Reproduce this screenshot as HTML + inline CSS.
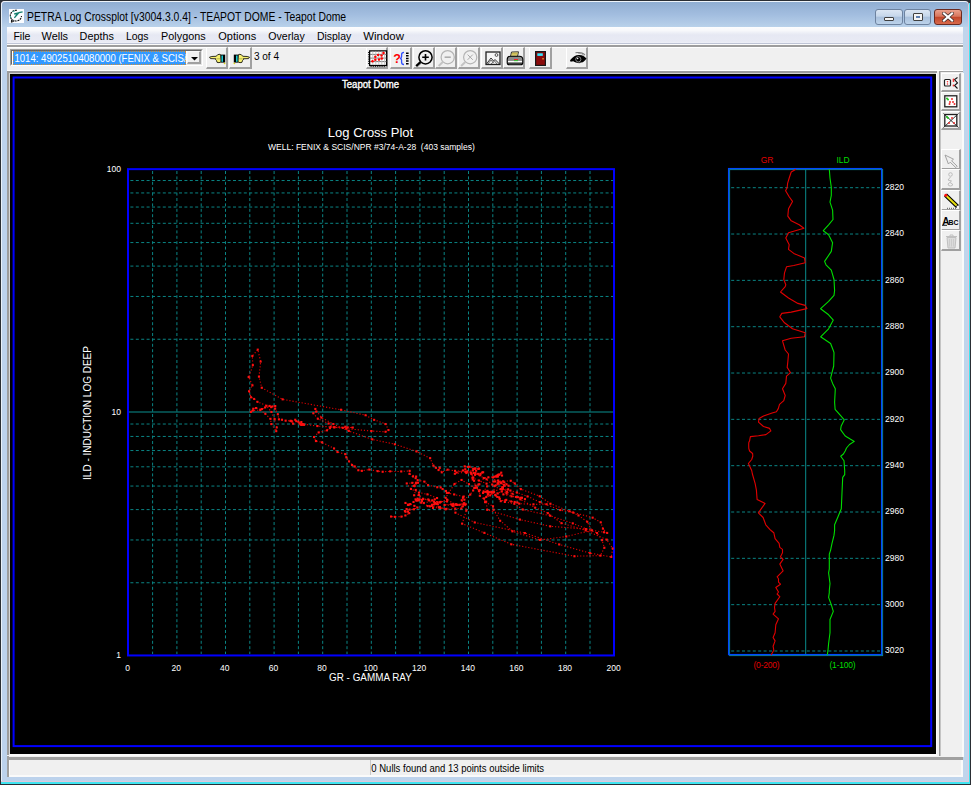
<!DOCTYPE html>
<html><head><meta charset="utf-8"><style>
*{margin:0;padding:0;box-sizing:border-box}
html,body{width:972px;height:786px;overflow:hidden;background:#fff;font-family:"Liberation Sans", sans-serif}
.abs{position:absolute}
svg text{font-family:"Liberation Sans", sans-serif}
.g{stroke:#0a8484;stroke-width:1;stroke-dasharray:3 2.4;fill:none}
.gs{stroke:#0b8f8f;stroke-width:1.2;fill:none}
</style></head><body>
<div class="abs" style="left:0;top:0;width:971px;height:785px;background:#2a2e34"></div>
<div class="abs" style="left:969px;top:3px;width:1.4px;height:781px;background:#40e4f0"></div>
<div class="abs" style="left:1px;top:782px;width:969px;height:1.6px;background:#40e4f0"></div>
<div class="abs" style="left:1px;top:1px;width:968px;height:781px;background:#e0c8da;border-radius:4px 4px 0 0"></div>
<div class="abs" style="left:1px;top:1px;width:967px;height:780px;background:linear-gradient(90deg,#bcd2ec,#c0d5ec);border-radius:4px 4px 0 0;border-top:1px solid #eef4fa;border-left:1px solid #e8f0f8"></div>
<div class="abs" style="left:2px;top:2px;width:966px;height:25px;border-radius:3px 3px 0 0;background:linear-gradient(#90aed2,#a2bddf 50%,#b9d1ea)"></div>
<svg class="abs" style="left:9px;top:9px" width="15" height="14" viewBox="0 0 15 14"><rect x="0" y="0" width="15" height="14" fill="#fafcff"/><path d="M8 1.3 C4 1 1.3 3.5 1.3 6.8 C1.3 9.8 3.8 12 7 12 C10 12 12.2 10 12.5 7" fill="none" stroke="#111" stroke-width="1.1" stroke-dasharray="2 0.8"/><path d="M2.6 10.5 L2.4 13.3 L5 12" fill="none" stroke="#111" stroke-width="1"/><path d="M13.6 2.8 L10 3.6 L6 8 M9.4 4 L5.2 5 M7.6 6 L5.4 8.8" fill="none" stroke="#138070" stroke-width="1.3"/><path d="M3.5 2.5 L6 2 M1.5 7 L1.8 9" stroke="#20a090" stroke-width="0.8"/></svg>
<div class="abs" style="left:875px;top:9px;width:28px;height:16px;border:1px solid #6d829f;border-radius:3px;background:linear-gradient(#dbe6f3,#c5d6ea 45%,#a9c0dc 50%,#bcd2ea)"></div>
<div class="abs" style="left:884px;top:17px;width:10px;height:4px;border:1px solid #404040;border-radius:1px;background:#f4f4f4"></div>
<div class="abs" style="left:904px;top:9px;width:27px;height:16px;border:1px solid #6d829f;border-radius:3px;background:linear-gradient(#dbe6f3,#c5d6ea 45%,#a9c0dc 50%,#bcd2ea)"></div>
<div class="abs" style="left:913px;top:13px;width:10px;height:8px;border:1px solid #404040;border-radius:1px;background:#f4f4f4"><div class="abs" style="left:2px;top:2px;width:4px;height:2px;background:#6080b0"></div></div>
<div class="abs" style="left:934px;top:9px;width:28px;height:16px;border:1px solid #6b2a20;border-radius:3px;background:linear-gradient(#eaa08c,#d8765e 45%,#c2462a 52%,#d86a4c)"></div>
<svg class="abs" style="left:942px;top:12px" width="12" height="10" viewBox="0 0 12 10"><path d="M2 1.5 L10 8.5 M10 1.5 L2 8.5" stroke="#3a2a2a" stroke-width="3.6" stroke-linecap="square"/><path d="M2 1.5 L10 8.5 M10 1.5 L2 8.5" stroke="#fff" stroke-width="2.2" stroke-linecap="square"/></svg>
<div class="abs" style="left:7px;top:27px;width:956px;height:17px;background:linear-gradient(#fdfdfe 0%,#f7f8fb 22%,#eceef6 38%,#e6e8f3 50%,#e8eaf4 90%,#eff0f8 100%);border-bottom:1px solid #bfc5d6"></div>
<div class="abs" style="left:7px;top:44px;width:956px;height:29px;background:#f0f0f0"></div>
<div class="abs" style="left:7px;top:44px;width:956px;height:1px;background:#fbfbfb"></div>
<div class="abs" style="left:7px;top:45px;width:956px;height:2px;background:#9d9d9d"></div>
<div class="abs" style="left:7px;top:47px;width:956px;height:1px;background:#ffffff"></div>
<div class="abs" style="left:7px;top:70px;width:956px;height:1px;background:#ffffff"></div>
<div class="abs" style="left:7px;top:71px;width:956px;height:2px;background:#a0a0a0"></div>
<div class="abs" style="left:7px;top:73px;width:956px;height:704px;background:#f0f0f0"></div>
<div class="abs" style="left:10px;top:49px;width:193px;height:17px;background:#fff;border-top:1px solid #a0a0a0;border-left:1px solid #a0a0a0;border-right:1px solid #fff;border-bottom:1px solid #fff"></div>
<div class="abs" style="left:11px;top:50px;width:191px;height:15px;border-top:1px solid #696969;border-left:1px solid #696969;border-right:1px solid #e3e3e3;border-bottom:1px solid #e3e3e3"></div>
<div class="abs" style="left:13px;top:51px;width:173px;height:14px;background:#3399ff;border:1px dotted #d89030"></div>
<div class="abs" style="left:187px;top:51px;width:14px;height:13px;background:#f0f0f0;border-top:1px solid #f8f8f8;border-left:1px solid #f8f8f8;border-right:2px solid #a0a0a0;border-bottom:2px solid #a0a0a0"></div>
<svg class="abs" style="left:191px;top:56.5px" width="8" height="5" viewBox="0 0 8 5"><path d="M0 0 H7 L3.5 3.6 Z" fill="#000"/></svg>
<div class="abs" style="left:206px;top:47px;width:22px;height:22px;background:#f0f0f0;border-top:1px solid #ffffff;border-left:1px solid #ffffff;border-right:2px solid #a0a0a0;border-bottom:2px solid #a0a0a0"></div>
<svg class="abs" style="left:208px;top:52px" width="18" height="13" viewBox="0 0 18 13"><path d="M1.5 5.2 Q3 4.2 8 4.3 L9.5 3 Q11 1.8 12.5 2.5 L13 10 Q11 11.2 9 10.3 L8.5 8.5 Q7 7.8 8 6.8 L2.5 6.6 Z" fill="#f6f070" stroke="#1a1a10" stroke-width="0.9"/><path d="M9 6.8 H12" stroke="#a0a040" stroke-width="0.7"/><rect x="13" y="2.6" width="4.2" height="8" fill="#000"/><rect x="13.4" y="3.5" width="1.6" height="6.3" fill="#18c8d0"/><circle cx="16.6" cy="11.3" r="0.9" fill="#d8d020"/></svg>
<div class="abs" style="left:229px;top:47px;width:23px;height:22px;background:#f0f0f0;border-top:1px solid #ffffff;border-left:1px solid #ffffff;border-right:2px solid #a0a0a0;border-bottom:2px solid #a0a0a0"></div>
<svg class="abs" style="left:233px;top:52px" width="18" height="13" viewBox="0 0 18 13"><g transform="translate(18 0) scale(-1 1)"><path d="M1.5 5.2 Q3 4.2 8 4.3 L9.5 3 Q11 1.8 12.5 2.5 L13 10 Q11 11.2 9 10.3 L8.5 8.5 Q7 7.8 8 6.8 L2.5 6.6 Z" fill="#f6f070" stroke="#1a1a10" stroke-width="0.9"/><path d="M9 6.8 H12" stroke="#a0a040" stroke-width="0.7"/><rect x="13" y="2.6" width="4.2" height="8" fill="#000"/><rect x="13.4" y="3.5" width="1.6" height="6.3" fill="#18c8d0"/><circle cx="16.6" cy="11.3" r="0.9" fill="#d8d020"/></g></svg>
<div class="abs" style="left:366px;top:47px;width:22px;height:22px;background:#f0f0f0;border-top:1px solid #ffffff;border-left:1px solid #ffffff;border-right:2px solid #a0a0a0;border-bottom:2px solid #a0a0a0"></div>
<div class="abs" style="left:390px;top:47px;width:22px;height:22px;background:#f0f0f0;border-top:1px solid #ffffff;border-left:1px solid #ffffff;border-right:2px solid #a0a0a0;border-bottom:2px solid #a0a0a0"></div>
<div class="abs" style="left:413px;top:47px;width:22px;height:22px;background:#f0f0f0;border-top:1px solid #ffffff;border-left:1px solid #ffffff;border-right:2px solid #a0a0a0;border-bottom:2px solid #a0a0a0"></div>
<div class="abs" style="left:435px;top:47px;width:22px;height:22px;background:#f0f0f0;border-top:1px solid #ffffff;border-left:1px solid #ffffff;border-right:2px solid #a0a0a0;border-bottom:2px solid #a0a0a0"></div>
<div class="abs" style="left:458px;top:47px;width:22px;height:22px;background:#f0f0f0;border-top:1px solid #ffffff;border-left:1px solid #ffffff;border-right:2px solid #a0a0a0;border-bottom:2px solid #a0a0a0"></div>
<div class="abs" style="left:481px;top:47px;width:22px;height:22px;background:#f0f0f0;border-top:1px solid #ffffff;border-left:1px solid #ffffff;border-right:2px solid #a0a0a0;border-bottom:2px solid #a0a0a0"></div>
<div class="abs" style="left:503px;top:47px;width:22px;height:22px;background:#f0f0f0;border-top:1px solid #ffffff;border-left:1px solid #ffffff;border-right:2px solid #a0a0a0;border-bottom:2px solid #a0a0a0"></div>
<div class="abs" style="left:529px;top:47px;width:23px;height:22px;background:#f0f0f0;border-top:1px solid #ffffff;border-left:1px solid #ffffff;border-right:2px solid #a0a0a0;border-bottom:2px solid #a0a0a0"></div>
<div class="abs" style="left:566px;top:47px;width:22px;height:22px;background:#f0f0f0;border-top:1px solid #ffffff;border-left:1px solid #ffffff;border-right:2px solid #a0a0a0;border-bottom:2px solid #a0a0a0"></div>
<svg class="abs" style="left:366px;top:47px" width="24" height="22" viewBox="0 0 24 22"><rect x="3.6" y="3.9" width="17" height="14.6" fill="#fff" stroke="#000" stroke-width="1.3"/><line x1="4" y1="7.4" x2="20.5" y2="7.4" stroke="#6a6a6a" stroke-width="0.9"/><line x1="4" y1="11.1" x2="20.5" y2="11.1" stroke="#6a6a6a" stroke-width="0.9"/><line x1="4" y1="14.6" x2="20.5" y2="14.6" stroke="#6a6a6a" stroke-width="0.9"/><line x1="6.8" y1="4.5" x2="6.8" y2="18" stroke="#c0c0c0" stroke-width="0.9"/><line x1="9.8" y1="4.5" x2="9.8" y2="18" stroke="#c0c0c0" stroke-width="0.9"/><line x1="12.8" y1="4.5" x2="12.8" y2="18" stroke="#c0c0c0" stroke-width="0.9"/><line x1="15.8" y1="4.5" x2="15.8" y2="18" stroke="#c0c0c0" stroke-width="0.9"/><line x1="18.6" y1="4.5" x2="18.6" y2="18" stroke="#c0c0c0" stroke-width="0.9"/><path d="M2.6 5 V18" stroke="#101010" stroke-width="1" stroke-dasharray="1 1.2"/><path d="M4.5 19.6 H20" stroke="#202020" stroke-width="1" stroke-dasharray="1.2 1"/><circle cx="6.5" cy="14.2" r="1.25" fill="#ff0000"/><circle cx="9.3" cy="9.7" r="1.25" fill="#ff0000"/><circle cx="9.3" cy="12.7" r="1.25" fill="#ff0000"/><circle cx="12.1" cy="7.9" r="1.25" fill="#ff0000"/><circle cx="13" cy="12.5" r="1.25" fill="#ff0000"/><circle cx="15.5" cy="8.6" r="1.25" fill="#ff0000"/><circle cx="15.8" cy="11.6" r="1.25" fill="#ff0000"/><circle cx="17.5" cy="6" r="1.25" fill="#ff0000"/></svg>
<svg class="abs" style="left:393px;top:51px" width="17" height="15" viewBox="0 0 17 15"><text x="0.3" y="12" font-size="12.5" font-weight="bold" fill="#ff0000" font-family="Liberation Serif">?</text><path d="M11 1.3 Q8.6 1.3 8.6 3.5 L8.6 5.5 Q8.6 7.2 7 7.4 Q8.6 7.6 8.6 9.3 L8.6 11.3 Q8.6 13.5 11 13.5" fill="none" stroke="#3050ff" stroke-width="1.3"/><path d="M14.3 1.5 V14" stroke="#000" stroke-width="2.6" stroke-dasharray="1.5 1.1"/></svg>
<svg class="abs" style="left:415px;top:49px" width="20" height="19" viewBox="0 0 20 19"><circle cx="10.5" cy="8.3" r="6.6" fill="none" stroke="#000" stroke-width="1.5"/><path d="M10.5 5 V11.6 M7.2 8.3 H13.8" stroke="#000" stroke-width="1.6"/><path d="M5.6 13.2 L1.2 17.2" stroke="#000" stroke-width="2.4"/><path d="M2.5 17.8 L6.5 14.2" stroke="#909090" stroke-width="0.7"/></svg>
<svg class="abs" style="left:437px;top:49px" width="20" height="19" viewBox="0 0 20 19"><circle cx="10.7" cy="8.2" r="6.6" fill="none" stroke="#b4b4b4" stroke-width="1.2"/><path d="M7.6 8.2 H13.8" stroke="#a8a8a8" stroke-width="1.5"/><path d="M5.8 13 L1.6 17" stroke="#c4c4c4" stroke-width="2"/></svg>
<svg class="abs" style="left:460px;top:49px" width="20" height="19" viewBox="0 0 20 19"><circle cx="10.2" cy="8.2" r="6.6" fill="none" stroke="#b4b4b4" stroke-width="1.2"/><path d="M7.6 5.6 L12.8 10.8 M12.8 5.6 L7.6 10.8" stroke="#a8a8a8" stroke-width="1"/><path d="M5.3 13 L1.1 17" stroke="#c4c4c4" stroke-width="2"/></svg>
<svg class="abs" style="left:485px;top:51px" width="16" height="15" viewBox="0 0 16 15"><rect x="1" y="1" width="14" height="12.5" fill="#f4f4f4" stroke="#202020" stroke-width="1.3"/><path d="M1.5 13 L6 7 L8.5 10 L10 8.5 L14.5 13" fill="none" stroke="#303030" stroke-width="1"/><path d="M3 13 L6 9 L8.5 12 M6 13 L9.5 10 L12 13" fill="none" stroke="#505050" stroke-width="0.8"/><circle cx="11.5" cy="4" r="1.4" fill="none" stroke="#404040" stroke-width="0.9"/></svg>
<svg class="abs" style="left:506px;top:51px" width="18" height="15" viewBox="0 0 18 15"><path d="M5.5 1 L12.5 0.8 L11.5 5.5 L4.5 5.5 Z" fill="#f4ee9a" stroke="#202020" stroke-width="0.9"/><path d="M6 2.4 H11.5 M5.6 3.9 H11.2" stroke="#b8a030" stroke-width="0.8"/><path d="M1.2 8.5 Q1.2 5.2 4.5 5.2 L13.5 5.2 Q16.8 5.2 16.8 8.5 L16.8 11.5 Q16.8 13.8 14.5 13.8 L3.5 13.8 Q1.2 13.8 1.2 11.5 Z" fill="#8c8c8c" stroke="#000" stroke-width="1.1"/><path d="M2 10.6 H16" stroke="#fff" stroke-width="1.3"/><path d="M8 8.6 H12" stroke="#ff2020" stroke-width="1.1"/><path d="M8 9.7 H12" stroke="#20d020" stroke-width="0.9"/><path d="M2 12.3 H16" stroke="#303030" stroke-width="1"/></svg>
<svg class="abs" style="left:535px;top:51px" width="11" height="15" viewBox="0 0 11 15"><rect x="0.6" y="0.6" width="9.8" height="13.8" fill="#8a0a0a" stroke="#181818" stroke-width="1.2"/><rect x="2.3" y="2.3" width="5.5" height="2.6" fill="#30e8ff"/><rect x="7.3" y="7" width="1.5" height="1.5" fill="#e09030"/></svg>
<svg class="abs" style="left:569px;top:51px" width="19" height="13" viewBox="0 0 19 13"><path d="M6.5 1.8 Q12 0.6 16 3.6" fill="none" stroke="#707070" stroke-width="1.1"/><path d="M9 2.2 Q13 2 15.5 4.8" fill="none" stroke="#909090" stroke-width="0.8"/><path d="M1 9.3 Q5.5 3.6 10.5 4 Q15 4.3 17.5 7.6 Q15 11.8 10.5 12.2 Q6.5 12.4 4.3 10.2 L1.6 10.8 Z" fill="#000"/><circle cx="9.3" cy="8.3" r="2.6" fill="none" stroke="#d8d8d8" stroke-width="0.6"/><circle cx="8.6" cy="7.5" r="0.8" fill="#f0f0f0"/><path d="M5 11.6 Q9 13 13 11.8" fill="none" stroke="#fff" stroke-width="0.6"/></svg>
<div class="abs" style="left:937px;top:71px;width:26px;height:686px;background:#f0f0f0"></div>
<div class="abs" style="left:962px;top:73px;width:2px;height:684px;background:#fafafa"></div>
<div class="abs" style="left:939px;top:71px;width:1px;height:685px;background:#969696"></div><div class="abs" style="left:940px;top:72px;width:1px;height:684px;background:#c4c4c4"></div>
<div class="abs" style="left:939px;top:71px;width:24px;height:1px;background:#a0a0a0"></div>
<div class="abs" style="left:941px;top:73px;width:20px;height:19px;background:#f0f0f0;border-top:1px solid #ffffff;border-left:1px solid #ffffff;border-right:2px solid #a0a0a0;border-bottom:2px solid #a0a0a0"></div>
<div class="abs" style="left:941px;top:92px;width:20px;height:19px;background:#f0f0f0;border-top:1px solid #ffffff;border-left:1px solid #ffffff;border-right:2px solid #a0a0a0;border-bottom:2px solid #a0a0a0"></div>
<div class="abs" style="left:941px;top:111px;width:20px;height:19px;background:#f0f0f0;border-top:1px solid #ffffff;border-left:1px solid #ffffff;border-right:2px solid #a0a0a0;border-bottom:2px solid #a0a0a0"></div>
<div class="abs" style="left:941px;top:149px;width:20px;height:21px;background:#f0f0f0;border-top:1px solid #ffffff;border-left:1px solid #ffffff;border-right:2px solid #a0a0a0;border-bottom:2px solid #a0a0a0"></div>
<div class="abs" style="left:941px;top:169px;width:20px;height:21px;background:#f0f0f0;border-top:1px solid #ffffff;border-left:1px solid #ffffff;border-right:2px solid #a0a0a0;border-bottom:2px solid #a0a0a0"></div>
<div class="abs" style="left:941px;top:190px;width:20px;height:21px;background:#f0f0f0;border-top:1px solid #ffffff;border-left:1px solid #ffffff;border-right:2px solid #a0a0a0;border-bottom:2px solid #a0a0a0"></div>
<div class="abs" style="left:941px;top:210px;width:20px;height:21px;background:#f0f0f0;border-top:1px solid #ffffff;border-left:1px solid #ffffff;border-right:2px solid #a0a0a0;border-bottom:2px solid #a0a0a0"></div>
<div class="abs" style="left:941px;top:230px;width:20px;height:21px;background:#f0f0f0;border-top:1px solid #ffffff;border-left:1px solid #ffffff;border-right:2px solid #a0a0a0;border-bottom:2px solid #a0a0a0"></div>
<svg class="abs" style="left:943px;top:76px" width="16" height="14" viewBox="0 0 16 14"><rect x="1.5" y="3.5" width="6" height="6.5" rx="1" fill="#fff" stroke="#202020" stroke-width="1.2"/><circle cx="4.5" cy="5.8" r="0.8" fill="#f03030"/><circle cx="4.5" cy="8" r="0.8" fill="#f03030"/><path d="M14.5 1.5 L11.5 3.5 L14.5 7 L11.5 9.5 L14.5 12.5" fill="none" stroke="#101010" stroke-width="1.1"/><circle cx="10.5" cy="3.5" r="0.9" fill="#f03030"/><circle cx="10.5" cy="5" r="0.9" fill="#f03030"/><circle cx="10.5" cy="9.5" r="0.9" fill="#f03030"/></svg>
<svg class="abs" style="left:944px;top:95px" width="14" height="13" viewBox="0 0 14 13"><rect x="0.8" y="0.8" width="12" height="11" fill="#fff" stroke="#202020" stroke-width="1.3"/><circle cx="3" cy="3.5" r="1" fill="#20c020"/><circle cx="4" cy="4.5" r="1" fill="#20c020"/><circle cx="8" cy="4" r="1" fill="#f03030"/><circle cx="6" cy="7" r="1" fill="#f03030"/><circle cx="9" cy="7" r="1" fill="#f03030"/><circle cx="10.5" cy="9" r="1" fill="#f03030"/><circle cx="5.5" cy="9" r="1" fill="#f03030"/></svg>
<svg class="abs" style="left:943px;top:113px" width="16" height="15" viewBox="0 0 16 15"><rect x="1.8" y="1.5" width="12" height="11.5" fill="#fff" stroke="#202020" stroke-width="1.3"/><path d="M0.5 0.5 L15.5 14.5 M15.5 0.5 L0.5 14.5" stroke="#303030" stroke-width="1"/><circle cx="4" cy="4" r="1" fill="#20c020"/><circle cx="5" cy="5" r="1" fill="#20c020"/><circle cx="9" cy="5" r="1" fill="#f03030"/><circle cx="6" cy="10" r="1" fill="#f03030"/><circle cx="11" cy="10" r="1" fill="#f03030"/></svg>
<svg class="abs" style="left:943px;top:152px" width="17" height="17" viewBox="0 0 17 17"><path d="M2 3 L10.5 7.2 L8.6 8.8 L14.2 14.2 L12.8 15.6 L7.2 10.2 L5.4 12 Z" fill="#f0f0f0" stroke="#9a9a9a" stroke-width="0.9"/></svg>
<svg class="abs" style="left:945px;top:172px" width="11" height="15" viewBox="0 0 11 15"><circle cx="5.5" cy="2.5" r="1.8" fill="none" stroke="#b8b8b8" stroke-width="0.9"/><path d="M5.5 5 L3 8 L6.5 9 L3 12 Q3 14 5.5 14 Q8 14 7.5 12 L5 10.5" fill="none" stroke="#b8b8b8" stroke-width="0.9"/></svg>
<svg class="abs" style="left:943px;top:192px" width="18" height="17" viewBox="0 0 18 17"><path d="M2.5 3 L14.5 14.5" stroke="#000" stroke-width="4.2"/><path d="M3 3.5 L13.5 13.5" stroke="#e8e010" stroke-width="2"/><path d="M13.6 13.6 L15.6 15.6" stroke="#fff" stroke-width="1.2"/><circle cx="2.8" cy="3.2" r="1.5" fill="#ff1010"/><path d="M4 16.3 H13" stroke="#303030" stroke-width="0.8" stroke-dasharray="1 1"/></svg>
<svg class="abs" style="left:941px;top:213px" width="19" height="15" viewBox="0 0 19 15"><text x="1.2" y="11.5" font-size="10" font-family="Liberation Serif" font-weight="bold" fill="#000">A</text><text x="7.6" y="11.5" font-size="8" font-family="Liberation Sans" font-weight="bold" fill="#000" textLength="10" lengthAdjust="spacingAndGlyphs">BC</text><path d="M1 12.3 H6" stroke="#000" stroke-width="0.9"/></svg>
<svg class="abs" style="left:945px;top:234px" width="13" height="15" viewBox="0 0 13 15"><path d="M1 2.5 H12 M5 2.5 V1 H8 V2.5" fill="none" stroke="#c0c0c0" stroke-width="1"/><path d="M2 3.5 L3 14 H10 L11 3.5 Z" fill="#dcdcdc" stroke="#c0c0c0" stroke-width="1"/><path d="M4.5 5 V12.5 M6.5 5 V12.5 M8.5 5 V12.5" stroke="#c8c8c8" stroke-width="0.8"/></svg>
<div class="abs" style="left:7px;top:71px;width:930px;height:2px;background:#9c9c9c"></div>
<div class="abs" style="left:7px;top:71px;width:2px;height:684px;background:#9c9c9c"></div>
<div class="abs" style="left:9px;top:73px;width:928px;height:1px;background:#d4d4d4"></div>
<div class="abs" style="left:9px;top:73px;width:1px;height:681px;background:#d4d4d4"></div>
<div class="abs" style="left:936px;top:73px;width:1px;height:682px;background:#fafafa"></div>
<div class="abs" style="left:10px;top:754px;width:927px;height:2px;background:#fafafa"></div>
<div class="abs" style="left:10px;top:74px;width:926px;height:680px;background:#000"></div>
<div class="abs" style="left:7px;top:757px;width:956px;height:3px;background:#a0a0a0"></div>
<div class="abs" style="left:7px;top:760px;width:956px;height:17px;background:#f0f0f0;border-bottom:2px solid #fafafa"></div>
<div class="abs" style="left:7px;top:756px;width:2px;height:21px;background:#a0a0a0"></div>
<div class="abs" style="left:9px;top:760px;width:1px;height:15px;background:#fafafa"></div>
<div class="abs" style="left:961px;top:760px;width:2px;height:17px;background:#fafafa"></div>
<div class="abs" style="left:370px;top:760px;width:1px;height:15px;background:#c8c8c8"></div>
<svg class="abs" style="left:0;top:0" width="972" height="786"><text x="27.0" y="20.7" font-size="12.5" fill="#000" textLength="319.1" lengthAdjust="spacingAndGlyphs" >PETRA Log Crossplot [v3004.3.0.4] - TEAPOT DOME - Teapot Dome</text><text x="13.4" y="39.8" font-size="11.2" fill="#000" textLength="17.0" lengthAdjust="spacingAndGlyphs" >File</text><text x="41.6" y="39.8" font-size="11.2" fill="#000" textLength="26.5" lengthAdjust="spacingAndGlyphs" >Wells</text><text x="79.6" y="39.8" font-size="11.2" fill="#000" textLength="34.2" lengthAdjust="spacingAndGlyphs" >Depths</text><text x="125.9" y="39.8" font-size="11.2" fill="#000" textLength="22.7" lengthAdjust="spacingAndGlyphs" >Logs</text><text x="161.1" y="39.8" font-size="11.2" fill="#000" textLength="44.5" lengthAdjust="spacingAndGlyphs" >Polygons</text><text x="218.3" y="39.8" font-size="11.2" fill="#000" textLength="37.9" lengthAdjust="spacingAndGlyphs" >Options</text><text x="268.3" y="39.8" font-size="11.2" fill="#000" textLength="36.5" lengthAdjust="spacingAndGlyphs" >Overlay</text><text x="316.9" y="39.8" font-size="11.2" fill="#000" textLength="34.3" lengthAdjust="spacingAndGlyphs" >Display</text><text x="363.3" y="39.8" font-size="11.2" fill="#000" textLength="40.6" lengthAdjust="spacingAndGlyphs" >Window</text><svg x="13" y="51" width="173" height="14"><text x="1.4" y="10.6" font-size="10.8" fill="#fff" textLength="172.2" lengthAdjust="spacingAndGlyphs">1014: 49025104080000 (FENIX &amp; SCIS/</text></svg><text x="253.9" y="59.6" font-size="11.5" fill="#000" textLength="25.1" lengthAdjust="spacingAndGlyphs" >3 of 4</text><text x="371.3" y="772" font-size="11.3" fill="#000" textLength="172.8" lengthAdjust="spacingAndGlyphs" >0 Nulls found and 13 points outside limits</text></svg>
<svg class="abs" style="left:0;top:0" width="972" height="786" viewBox="0 0 972 786">
<rect x="13.6" y="77.5" width="917.6" height="668.6" fill="none" stroke="#0000ff" stroke-width="2"/>
<line x1="152.60" y1="171" x2="152.60" y2="654" class="g"/>
<line x1="176.90" y1="171" x2="176.90" y2="654" class="g"/>
<line x1="201.20" y1="171" x2="201.20" y2="654" class="g"/>
<line x1="225.50" y1="171" x2="225.50" y2="654" class="g"/>
<line x1="249.80" y1="171" x2="249.80" y2="654" class="g"/>
<line x1="274.10" y1="171" x2="274.10" y2="654" class="g"/>
<line x1="298.40" y1="171" x2="298.40" y2="654" class="g"/>
<line x1="322.70" y1="171" x2="322.70" y2="654" class="g"/>
<line x1="347.00" y1="171" x2="347.00" y2="654" class="g"/>
<line x1="371.30" y1="171" x2="371.30" y2="654" class="g"/>
<line x1="395.60" y1="171" x2="395.60" y2="654" class="g"/>
<line x1="419.90" y1="171" x2="419.90" y2="654" class="g"/>
<line x1="444.20" y1="171" x2="444.20" y2="654" class="g"/>
<line x1="468.50" y1="171" x2="468.50" y2="654" class="g"/>
<line x1="492.80" y1="171" x2="492.80" y2="654" class="g"/>
<line x1="517.10" y1="171" x2="517.10" y2="654" class="g"/>
<line x1="541.40" y1="171" x2="541.40" y2="654" class="g"/>
<line x1="565.70" y1="171" x2="565.70" y2="654" class="g"/>
<line x1="590.00" y1="171" x2="590.00" y2="654" class="g"/>
<line x1="130.4" y1="582.75" x2="613" y2="582.75" class="g"/>
<line x1="130.4" y1="539.96" x2="613" y2="539.96" class="g"/>
<line x1="130.4" y1="509.60" x2="613" y2="509.60" class="g"/>
<line x1="130.4" y1="486.05" x2="613" y2="486.05" class="g"/>
<line x1="130.4" y1="466.81" x2="613" y2="466.81" class="g"/>
<line x1="130.4" y1="450.54" x2="613" y2="450.54" class="g"/>
<line x1="130.4" y1="436.45" x2="613" y2="436.45" class="g"/>
<line x1="130.4" y1="424.02" x2="613" y2="424.02" class="g"/>
<line x1="130.4" y1="339.25" x2="613" y2="339.25" class="g"/>
<line x1="130.4" y1="296.46" x2="613" y2="296.46" class="g"/>
<line x1="130.4" y1="266.10" x2="613" y2="266.10" class="g"/>
<line x1="130.4" y1="242.55" x2="613" y2="242.55" class="g"/>
<line x1="130.4" y1="223.31" x2="613" y2="223.31" class="g"/>
<line x1="130.4" y1="207.04" x2="613" y2="207.04" class="g"/>
<line x1="130.4" y1="192.95" x2="613" y2="192.95" class="g"/>
<line x1="130.4" y1="180.52" x2="613" y2="180.52" class="g"/>
<line x1="129" y1="412.00" x2="613" y2="412.00" class="gs"/>
<rect x="128" y="169.15" width="486" height="486.3" fill="none" stroke="#0000ff" stroke-width="2"/>
<line x1="731.2" y1="187.70" x2="881" y2="187.70" class="g"/>
<line x1="731.2" y1="234.03" x2="881" y2="234.03" class="g"/>
<line x1="731.2" y1="280.36" x2="881" y2="280.36" class="g"/>
<line x1="731.2" y1="326.69" x2="881" y2="326.69" class="g"/>
<line x1="731.2" y1="373.02" x2="881" y2="373.02" class="g"/>
<line x1="731.2" y1="419.35" x2="881" y2="419.35" class="g"/>
<line x1="731.2" y1="465.68" x2="881" y2="465.68" class="g"/>
<line x1="731.2" y1="512.01" x2="881" y2="512.01" class="g"/>
<line x1="731.2" y1="558.34" x2="881" y2="558.34" class="g"/>
<line x1="731.2" y1="604.67" x2="881" y2="604.67" class="g"/>
<line x1="731.2" y1="651.00" x2="881" y2="651.00" class="g"/>
<line x1="805.7" y1="169" x2="805.7" y2="655" stroke="#0a8c8c" stroke-width="1"/>
<rect x="729.6" y="169.6" width="153" height="486" fill="none" stroke="#0a8c8c" stroke-width="1"/>
<rect x="728.6" y="168.6" width="153" height="486" fill="none" stroke="#0048ff" stroke-width="1.3"/>
<path d="M795.9 169.3 L791.2 172.0 L789.2 178.0 L787.6 183.4 L787.2 187.4 L785.6 190.7 L789.2 196.8 L792.5 201.4 L788.5 208.8 L787.8 216.2 L791.2 220.8 L799.2 224.8 L803.9 228.2 L797.9 230.0 L788.5 232.7 L785.8 238.0 L789.2 244.7 L788.5 249.4 L793.8 253.4 L804.5 258.1 L805.2 262.8 L793.8 265.5 L786.5 266.8 L784.5 272.8 L783.8 279.5 L785.8 284.8 L785.2 286.7 L780.5 292.0 L788.5 298.0 L797.9 303.4 L805.2 305.4 L806.9 308.6 L791.2 312.1 L781.8 313.4 L779.8 316.8 L784.5 322.8 L792.5 328.8 L805.2 332.8 L804.5 336.8 L791.2 338.2 L782.5 340.8 L785.2 350.0 L788.5 354.0 L787.8 362.0 L787.2 367.4 L790.5 372.7 L786.5 376.1 L785.8 383.4 L782.5 388.8 L785.2 395.5 L783.8 400.6 L779.5 404.3 L778.3 408.6 L776.4 411.7 L772.1 413.0 L763.5 416.0 L759.1 418.5 L758.5 422.2 L763.5 426.5 L769.6 428.4 L770.9 430.9 L765.9 434.6 L758.5 435.8 L750.4 436.6 L750.0 438.5 L749.6 440.8 L748.8 442.5 L748.7 445.0 L748.8 448.5 L749.6 451.0 L752.6 453.5 L752.8 456.0 L751.7 459.5 L748.4 463.5 L751.7 470.5 L752.4 474.0 L755.1 483.4 L756.4 490.1 L757.1 499.4 L765.1 503.4 L761.7 508.1 L758.4 512.8 L763.1 517.5 L765.8 524.8 L769.8 529.3 L771.1 530.5 L773.8 532.7 L775.1 538.7 L779.1 543.4 L779.8 547.4 L782.5 549.4 L782.5 552.7 L780.5 556.8 L783.1 559.4 L779.8 564.1 L783.1 570.8 L777.1 576.8 L778.5 578.8 L778.5 582.2 L780.5 584.2 L775.8 587.5 L778.5 592.0 L777.1 594.0 L779.8 596.7 L775.1 603.4 L774.5 607.4 L775.1 611.4 L773.1 614.1 L778.5 618.8 L775.8 624.8 L775.1 632.8 L773.1 637.5 L775.1 640.9 L773.1 646.2 L773.8 650.2 L771.1 654.9" fill="none" stroke="#e00000" stroke-width="1.1" stroke-linejoin="round"/>
<path d="M829.3 169.3 L830.0 178.0 L831.3 187.4 L831.3 195.4 L830.0 202.1 L832.6 210.1 L833.0 219.5 L828.6 224.8 L823.3 230.7 L828.6 234.7 L832.6 242.7 L831.3 251.4 L824.6 261.4 L826.0 264.8 L831.3 270.1 L834.0 279.5 L834.6 290.5 L834.0 295.4 L828.6 301.4 L820.6 308.7 L828.6 314.8 L833.3 320.1 L828.6 328.8 L820.6 336.8 L830.6 343.5 L833.3 350.5 L834.0 352.7 L833.7 366.0 L832.0 372.7 L830.6 378.1 L832.6 383.4 L835.3 388.8 L834.6 402.2 L835.1 409.3 L840.0 414.8 L844.3 419.8 L841.2 425.9 L840.6 429.6 L845.0 435.8 L846.4 436.7 L849.8 438.8 L854.3 441.4 L849.5 444.5 L846.5 448.0 L845.2 451.0 L843.4 454.0 L840.7 456.2 L844.0 460.8 L844.7 470.5 L844.7 474.7 L842.7 477.4 L842.0 492.7 L841.3 508.8 L838.0 516.8 L834.6 524.8 L834.6 530.5 L834.0 535.4 L832.0 543.4 L830.6 550.1 L829.3 554.1 L829.3 568.8 L828.6 572.8 L830.0 583.5 L829.3 590.5 L829.3 592.7 L828.6 597.4 L831.3 604.7 L833.3 611.4 L830.0 619.5 L830.0 632.8 L828.6 643.5 L828.0 650.2 L827.3 654.9" fill="none" stroke="#00dd00" stroke-width="1.1" stroke-linejoin="round"/>
<path d="M546.6 504.2 L533.5 504.4 L519.3 503.7 L517.2 502.4 L514.6 502.0 L511.2 501.4 L505.6 500.2 L506.3 499.9 L500.8 501.1 L499.7 498.8 L499.2 497.3 L497.3 496.8 L495.2 494.8 L493.0 492.4 L494.1 491.9 L491.5 492.7 L488.3 492.1 L486.0 491.8 L483.1 492.9 L487.5 490.8 L491.5 491.8 L497.8 493.4 L501.7 491.3 L503.4 494.4 L511.6 496.4 L517.9 497.1 L520.4 497.7 L524.9 499.1 L522.0 497.8 L515.9 496.9 L512.6 493.7 L506.9 491.9 L502.1 488.7 L502.3 487.6 L497.6 483.4 L501.1 482.8 L495.5 485.5 L498.1 483.4 L495.2 481.4 L498.8 481.9 L503.2 481.3 L510.7 480.8 L514.8 483.5 L520.8 489.1 L539.6 496.2 L550.5 503.7 L569.5 511.3 L578.4 515.4 L587.2 521.7 L591.8 530.4 L566.3 536.5 L539.9 540.0 L512.5 531.3 L500.2 520.7 L493.5 509.7 L493.1 506.3 L485.1 502.1 L484.0 498.5 L490.1 495.3 L493.7 491.7 L494.6 486.1 L501.2 483.2 L503.9 485.0 L504.6 485.7 L503.0 487.2 L503.0 488.6 L502.1 489.2 L510.5 490.6 L517.0 492.5 L527.6 496.4 L539.9 502.1 L560.3 510.1 L573.2 512.5 L592.6 517.6 L600.8 522.4 L602.9 528.7 L607.2 533.0 L604.0 532.3 L585.8 529.1 L550.2 526.3 L519.9 519.6 L487.3 509.8 L486.1 501.6 L479.9 495.8 L479.3 490.2 L478.9 491.2 L476.9 487.8 L475.5 485.6 L474.0 480.8 L472.7 479.6 L473.3 477.4 L471.3 473.9 L474.9 474.8 L480.3 475.2 L480.5 473.9 L482.2 472.6 L483.1 472.2 L478.2 473.9 L475.4 472.9 L466.3 473.0 L463.0 470.4 L456.6 472.6 L454.8 473.7 L466.0 472.0 L473.7 473.0 L486.5 479.2 L492.3 484.6 L506.5 493.4 L520.4 499.4 L535.2 507.7 L547.8 513.1 L561.5 523.1 L585.7 530.4 L606.7 539.7 L612.7 548.4 L611.3 557.0 L590.0 553.1 L559.3 544.5 L524.9 533.0 L474.8 522.5 L455.4 512.7 L453.3 503.8 L445.6 497.8 L448.7 492.9 L454.5 484.0 L461.5 480.0 L468.9 484.1 L474.3 488.0 L487.5 492.4 L495.8 495.6 L504.8 501.9 L514.4 503.8 L522.9 509.6 L550.2 515.7 L572.8 523.4 L597.0 533.0 L602.1 540.2 L604.4 547.8 L600.4 555.6 L574.4 556.2 L511.3 544.3 L484.3 532.9 L462.2 523.6 L466.4 510.6 L464.3 499.7 L470.2 494.5 L473.1 490.4 L475.2 487.9 L478.4 484.6 L479.3 484.3 L483.8 478.0 L488.3 477.3 L497.8 476.6 L501.3 472.7 L498.6 474.5 L502.0 475.5 L499.4 474.7 L496.6 475.8 L497.7 475.1 L496.6 476.3 L494.4 476.6 L496.3 476.3 L492.9 477.4 L497.2 476.0 L493.5 481.5 L498.1 480.5 L504.4 482.5 L506.6 484.3 L508.5 485.8 L508.1 489.5 L500.7 489.0 L487.8 493.4 L488.0 494.6 L486.2 497.0 L489.2 492.1 L483.6 491.5 L487.1 486.4 L486.6 483.6 L479.0 480.6 L472.5 477.7 L470.9 472.6 L465.3 469.4 L464.6 466.3 L467.9 466.9 L469.6 466.7 L473.2 468.7 L475.2 468.3 L479.0 468.5 L478.4 468.9 L476.2 470.7 L474.9 468.9 L472.8 470.5 L467.3 471.6 L455.1 470.9 L447.7 469.7 L441.7 472.4 L439.7 467.8 L438.5 470.1 L435.9 467.7 L433.3 465.5 L430.1 458.2 L416.5 451.4 L394.8 444.2 L372.2 439.4 L348.8 431.0 L333.4 424.0 L321.4 417.6 L315.3 408.9 L316.2 411.6 L313.3 413.2 L317.9 418.8 L328.6 423.5 L334.3 427.3 L346.5 428.7 L371.4 431.0 L385.5 431.8 L388.5 430.1 L385.6 424.0 L374.2 419.8 L365.5 415.2 L341.0 409.8 L282.6 399.4 L261.7 387.7 L259.0 376.6 L260.7 361.6 L257.8 349.6 L252.3 356.0 L252.9 365.2 L248.7 377.1 L252.5 385.3 L249.1 391.2 L251.1 397.2 L254.1 398.9 L257.4 401.8 L266.4 405.7 L271.4 412.0 L274.7 419.1 L276.7 427.5 L276.2 431.1 L271.3 424.1 L270.4 418.9 L265.3 413.8 L260.2 410.1 L252.8 410.5 L250.8 412.0 L253.2 408.7 L256.0 408.0 L262.0 409.0 L265.0 407.4 L269.6 406.0 L271.1 407.2 L272.5 406.4 L275.3 406.1 L275.1 408.7 L277.8 414.3 L278.9 419.4 L282.0 419.8 L285.7 420.7 L290.4 420.9 L290.8 420.8 L293.0 423.6 L291.8 421.4 L295.2 419.7 L296.3 421.1 L298.4 421.8 L299.5 423.2 L300.6 424.5 L302.1 424.8 L301.3 422.0 L301.2 424.4 L303.8 424.8 L301.5 424.9 L304.1 424.8 L302.7 424.1 L317.5 426.1 L330.5 426.9 L347.3 427.5 L352.8 427.6 L345.3 426.7 L342.8 427.8 L334.4 427.3 L329.9 428.1 L326.9 430.4 L318.6 432.4 L314.1 437.0 L316.0 441.0 L322.0 442.4 L334.1 448.5 L337.4 452.1 L345.4 454.2 L346.4 457.3 L349.1 461.3 L352.1 464.9 L354.7 466.5 L358.3 470.3 L361.9 470.9 L369.2 469.5 L377.8 471.1 L382.7 471.7 L390.2 471.4 L401.2 471.5 L409.7 470.9 L409.5 473.8 L416.2 476.6 L413.0 476.5 L415.6 478.1 L417.6 480.1 L424.5 481.6 L428.1 485.2 L437.3 487.2 L440.7 487.4 L442.5 489.0 L445.9 490.9 L446.9 492.9 L454.2 494.5 L463.7 496.6 L462.9 497.6 L461.8 500.2 L463.5 503.9 L457.4 504.8 L455.7 504.4 L453.4 505.4 L459.7 504.7 L463.9 503.3 L462.5 506.4 L457.0 504.8 L451.2 504.3 L444.6 504.9 L452.7 505.3 L452.7 506.0 L456.2 504.4 L464.2 504.7 L465.8 504.2 L461.4 508.4 L455.3 508.6 L445.5 509.3 L439.8 506.9 L430.0 506.4 L431.9 504.7 L437.8 504.2 L437.5 502.1 L440.0 502.5 L440.6 501.9 L447.1 499.6 L447.1 501.5 L434.0 501.7 L421.1 502.6 L423.7 503.0 L427.6 506.1 L433.9 504.4 L436.8 503.8 L431.9 505.9 L433.1 507.9 L439.0 507.6 L446.4 508.8 L440.3 508.1 L435.0 503.0 L428.3 499.5 L423.0 498.9 L418.9 495.1 L414.2 495.3 L415.7 489.9 L414.6 485.9 L413.6 485.9 L415.8 483.5 L418.0 482.8 L416.1 482.7 L412.2 482.8 L406.8 483.5 L410.9 488.9 L418.9 492.6 L427.4 494.3 L437.1 498.0 L434.7 499.4 L432.3 500.4 L429.2 500.4 L423.1 498.8 L422.1 501.2 L422.1 499.9 L417.6 498.7 L419.7 499.4 L418.8 500.4 L415.6 499.3 L417.2 500.5 L416.3 500.5 L413.5 501.9 L409.3 504.6 L405.5 502.9 L407.9 504.9 L410.3 504.0 L414.4 505.9 L417.5 507.5 L414.0 509.3 L409.6 509.5 L406.6 509.0 L407.9 511.5 L404.9 511.0 L405.6 511.7 L409.3 513.2 L405.5 515.5 L401.5 516.6 L395.0 516.8 L391.1 516.6" fill="none" stroke="#e00000" stroke-width="1.1" stroke-dasharray="1.2 1.9"/>
<g fill="#ff1010"><rect x="545.6" y="503.2" width="2.1" height="2.1"/><rect x="532.4" y="503.3" width="2.1" height="2.1"/><rect x="518.2" y="502.6" width="2.1" height="2.1"/><rect x="516.2" y="501.4" width="2.1" height="2.1"/><rect x="513.6" y="500.9" width="2.1" height="2.1"/><rect x="510.1" y="500.4" width="2.1" height="2.1"/><rect x="504.6" y="499.1" width="2.1" height="2.1"/><rect x="505.2" y="498.8" width="2.1" height="2.1"/><rect x="499.7" y="500.1" width="2.1" height="2.1"/><rect x="498.6" y="497.8" width="2.1" height="2.1"/><rect x="498.1" y="496.3" width="2.1" height="2.1"/><rect x="496.2" y="495.8" width="2.1" height="2.1"/><rect x="494.2" y="493.7" width="2.1" height="2.1"/><rect x="492.0" y="491.4" width="2.1" height="2.1"/><rect x="493.0" y="490.8" width="2.1" height="2.1"/><rect x="490.5" y="491.7" width="2.1" height="2.1"/><rect x="487.2" y="491.0" width="2.1" height="2.1"/><rect x="485.0" y="490.7" width="2.1" height="2.1"/><rect x="482.0" y="491.9" width="2.1" height="2.1"/><rect x="486.4" y="489.8" width="2.1" height="2.1"/><rect x="490.4" y="490.7" width="2.1" height="2.1"/><rect x="496.7" y="492.4" width="2.1" height="2.1"/><rect x="500.6" y="490.3" width="2.1" height="2.1"/><rect x="502.3" y="493.3" width="2.1" height="2.1"/><rect x="510.5" y="495.3" width="2.1" height="2.1"/><rect x="516.8" y="496.1" width="2.1" height="2.1"/><rect x="519.4" y="496.7" width="2.1" height="2.1"/><rect x="523.9" y="498.1" width="2.1" height="2.1"/><rect x="520.9" y="496.7" width="2.1" height="2.1"/><rect x="514.9" y="495.9" width="2.1" height="2.1"/><rect x="511.5" y="492.7" width="2.1" height="2.1"/><rect x="505.9" y="490.8" width="2.1" height="2.1"/><rect x="501.0" y="487.6" width="2.1" height="2.1"/><rect x="501.3" y="486.6" width="2.1" height="2.1"/><rect x="496.5" y="482.4" width="2.1" height="2.1"/><rect x="500.1" y="481.7" width="2.1" height="2.1"/><rect x="494.5" y="484.4" width="2.1" height="2.1"/><rect x="497.0" y="482.3" width="2.1" height="2.1"/><rect x="494.2" y="480.4" width="2.1" height="2.1"/><rect x="497.8" y="480.8" width="2.1" height="2.1"/><rect x="502.1" y="480.2" width="2.1" height="2.1"/><rect x="509.7" y="479.7" width="2.1" height="2.1"/><rect x="513.7" y="482.4" width="2.1" height="2.1"/><rect x="519.8" y="488.1" width="2.1" height="2.1"/><rect x="538.6" y="495.2" width="2.1" height="2.1"/><rect x="549.4" y="502.7" width="2.1" height="2.1"/><rect x="568.4" y="510.2" width="2.1" height="2.1"/><rect x="577.4" y="514.4" width="2.1" height="2.1"/><rect x="586.2" y="520.7" width="2.1" height="2.1"/><rect x="590.8" y="529.3" width="2.1" height="2.1"/><rect x="565.2" y="535.4" width="2.1" height="2.1"/><rect x="538.9" y="538.9" width="2.1" height="2.1"/><rect x="511.4" y="530.3" width="2.1" height="2.1"/><rect x="499.1" y="519.7" width="2.1" height="2.1"/><rect x="492.5" y="508.6" width="2.1" height="2.1"/><rect x="492.0" y="505.2" width="2.1" height="2.1"/><rect x="484.0" y="501.1" width="2.1" height="2.1"/><rect x="483.0" y="497.4" width="2.1" height="2.1"/><rect x="489.1" y="494.3" width="2.1" height="2.1"/><rect x="492.7" y="490.7" width="2.1" height="2.1"/><rect x="493.5" y="485.0" width="2.1" height="2.1"/><rect x="500.2" y="482.1" width="2.1" height="2.1"/><rect x="502.9" y="484.0" width="2.1" height="2.1"/><rect x="503.5" y="484.7" width="2.1" height="2.1"/><rect x="501.9" y="486.1" width="2.1" height="2.1"/><rect x="501.9" y="487.5" width="2.1" height="2.1"/><rect x="501.1" y="488.1" width="2.1" height="2.1"/><rect x="509.4" y="489.5" width="2.1" height="2.1"/><rect x="515.9" y="491.5" width="2.1" height="2.1"/><rect x="526.5" y="495.4" width="2.1" height="2.1"/><rect x="538.8" y="501.0" width="2.1" height="2.1"/><rect x="559.2" y="509.0" width="2.1" height="2.1"/><rect x="572.1" y="511.4" width="2.1" height="2.1"/><rect x="591.6" y="516.6" width="2.1" height="2.1"/><rect x="599.7" y="521.3" width="2.1" height="2.1"/><rect x="601.9" y="527.6" width="2.1" height="2.1"/><rect x="606.1" y="531.9" width="2.1" height="2.1"/><rect x="602.9" y="531.2" width="2.1" height="2.1"/><rect x="584.8" y="528.0" width="2.1" height="2.1"/><rect x="549.2" y="525.3" width="2.1" height="2.1"/><rect x="518.9" y="518.5" width="2.1" height="2.1"/><rect x="486.2" y="508.8" width="2.1" height="2.1"/><rect x="485.1" y="500.6" width="2.1" height="2.1"/><rect x="478.8" y="494.7" width="2.1" height="2.1"/><rect x="478.3" y="489.1" width="2.1" height="2.1"/><rect x="477.9" y="490.1" width="2.1" height="2.1"/><rect x="475.9" y="486.7" width="2.1" height="2.1"/><rect x="474.5" y="484.6" width="2.1" height="2.1"/><rect x="473.0" y="479.7" width="2.1" height="2.1"/><rect x="471.7" y="478.5" width="2.1" height="2.1"/><rect x="472.3" y="476.4" width="2.1" height="2.1"/><rect x="470.2" y="472.8" width="2.1" height="2.1"/><rect x="473.9" y="473.8" width="2.1" height="2.1"/><rect x="479.2" y="474.2" width="2.1" height="2.1"/><rect x="479.4" y="472.9" width="2.1" height="2.1"/><rect x="481.1" y="471.5" width="2.1" height="2.1"/><rect x="482.1" y="471.2" width="2.1" height="2.1"/><rect x="477.1" y="472.8" width="2.1" height="2.1"/><rect x="474.4" y="471.9" width="2.1" height="2.1"/><rect x="465.3" y="472.0" width="2.1" height="2.1"/><rect x="461.9" y="469.4" width="2.1" height="2.1"/><rect x="455.5" y="471.5" width="2.1" height="2.1"/><rect x="453.8" y="472.7" width="2.1" height="2.1"/><rect x="465.0" y="470.9" width="2.1" height="2.1"/><rect x="472.6" y="471.9" width="2.1" height="2.1"/><rect x="485.5" y="478.2" width="2.1" height="2.1"/><rect x="491.2" y="483.5" width="2.1" height="2.1"/><rect x="505.5" y="492.4" width="2.1" height="2.1"/><rect x="519.4" y="498.3" width="2.1" height="2.1"/><rect x="534.1" y="506.6" width="2.1" height="2.1"/><rect x="546.8" y="512.1" width="2.1" height="2.1"/><rect x="560.4" y="522.1" width="2.1" height="2.1"/><rect x="584.6" y="529.3" width="2.1" height="2.1"/><rect x="605.7" y="538.6" width="2.1" height="2.1"/><rect x="611.6" y="547.4" width="2.1" height="2.1"/><rect x="610.2" y="555.9" width="2.1" height="2.1"/><rect x="589.0" y="552.1" width="2.1" height="2.1"/><rect x="558.2" y="543.4" width="2.1" height="2.1"/><rect x="523.8" y="532.0" width="2.1" height="2.1"/><rect x="473.7" y="521.4" width="2.1" height="2.1"/><rect x="454.4" y="511.6" width="2.1" height="2.1"/><rect x="452.2" y="502.8" width="2.1" height="2.1"/><rect x="444.6" y="496.7" width="2.1" height="2.1"/><rect x="447.7" y="491.8" width="2.1" height="2.1"/><rect x="453.5" y="482.9" width="2.1" height="2.1"/><rect x="460.5" y="478.9" width="2.1" height="2.1"/><rect x="467.9" y="483.1" width="2.1" height="2.1"/><rect x="473.2" y="487.0" width="2.1" height="2.1"/><rect x="486.5" y="491.3" width="2.1" height="2.1"/><rect x="494.7" y="494.5" width="2.1" height="2.1"/><rect x="503.8" y="500.9" width="2.1" height="2.1"/><rect x="513.3" y="502.7" width="2.1" height="2.1"/><rect x="521.8" y="508.5" width="2.1" height="2.1"/><rect x="549.2" y="514.7" width="2.1" height="2.1"/><rect x="571.7" y="522.3" width="2.1" height="2.1"/><rect x="596.0" y="532.0" width="2.1" height="2.1"/><rect x="601.0" y="539.1" width="2.1" height="2.1"/><rect x="603.3" y="546.7" width="2.1" height="2.1"/><rect x="599.4" y="554.6" width="2.1" height="2.1"/><rect x="573.4" y="555.2" width="2.1" height="2.1"/><rect x="510.3" y="543.3" width="2.1" height="2.1"/><rect x="483.3" y="531.8" width="2.1" height="2.1"/><rect x="461.1" y="522.6" width="2.1" height="2.1"/><rect x="465.3" y="509.5" width="2.1" height="2.1"/><rect x="463.3" y="498.6" width="2.1" height="2.1"/><rect x="469.2" y="493.5" width="2.1" height="2.1"/><rect x="472.1" y="489.4" width="2.1" height="2.1"/><rect x="474.1" y="486.8" width="2.1" height="2.1"/><rect x="477.3" y="483.5" width="2.1" height="2.1"/><rect x="478.3" y="483.2" width="2.1" height="2.1"/><rect x="482.8" y="477.0" width="2.1" height="2.1"/><rect x="487.3" y="476.3" width="2.1" height="2.1"/><rect x="496.8" y="475.5" width="2.1" height="2.1"/><rect x="500.2" y="471.6" width="2.1" height="2.1"/><rect x="497.5" y="473.5" width="2.1" height="2.1"/><rect x="501.0" y="474.5" width="2.1" height="2.1"/><rect x="498.4" y="473.6" width="2.1" height="2.1"/><rect x="495.6" y="474.8" width="2.1" height="2.1"/><rect x="496.6" y="474.1" width="2.1" height="2.1"/><rect x="495.5" y="475.2" width="2.1" height="2.1"/><rect x="493.3" y="475.6" width="2.1" height="2.1"/><rect x="495.3" y="475.3" width="2.1" height="2.1"/><rect x="491.9" y="476.4" width="2.1" height="2.1"/><rect x="496.2" y="474.9" width="2.1" height="2.1"/><rect x="492.4" y="480.5" width="2.1" height="2.1"/><rect x="497.1" y="479.4" width="2.1" height="2.1"/><rect x="503.3" y="481.4" width="2.1" height="2.1"/><rect x="505.5" y="483.3" width="2.1" height="2.1"/><rect x="507.5" y="484.7" width="2.1" height="2.1"/><rect x="507.1" y="488.4" width="2.1" height="2.1"/><rect x="499.7" y="488.0" width="2.1" height="2.1"/><rect x="486.8" y="492.4" width="2.1" height="2.1"/><rect x="486.9" y="493.5" width="2.1" height="2.1"/><rect x="485.2" y="495.9" width="2.1" height="2.1"/><rect x="488.1" y="491.1" width="2.1" height="2.1"/><rect x="482.6" y="490.5" width="2.1" height="2.1"/><rect x="486.1" y="485.3" width="2.1" height="2.1"/><rect x="485.5" y="482.6" width="2.1" height="2.1"/><rect x="477.9" y="479.5" width="2.1" height="2.1"/><rect x="471.4" y="476.7" width="2.1" height="2.1"/><rect x="469.8" y="471.6" width="2.1" height="2.1"/><rect x="464.2" y="468.4" width="2.1" height="2.1"/><rect x="463.6" y="465.3" width="2.1" height="2.1"/><rect x="466.9" y="465.8" width="2.1" height="2.1"/><rect x="468.5" y="465.7" width="2.1" height="2.1"/><rect x="472.1" y="467.7" width="2.1" height="2.1"/><rect x="474.2" y="467.3" width="2.1" height="2.1"/><rect x="478.0" y="467.5" width="2.1" height="2.1"/><rect x="477.4" y="467.9" width="2.1" height="2.1"/><rect x="475.1" y="469.7" width="2.1" height="2.1"/><rect x="473.8" y="467.8" width="2.1" height="2.1"/><rect x="471.8" y="469.4" width="2.1" height="2.1"/><rect x="466.2" y="470.6" width="2.1" height="2.1"/><rect x="454.0" y="469.8" width="2.1" height="2.1"/><rect x="446.6" y="468.6" width="2.1" height="2.1"/><rect x="440.7" y="471.3" width="2.1" height="2.1"/><rect x="438.6" y="466.7" width="2.1" height="2.1"/><rect x="437.5" y="469.0" width="2.1" height="2.1"/><rect x="434.8" y="466.7" width="2.1" height="2.1"/><rect x="432.3" y="464.5" width="2.1" height="2.1"/><rect x="429.1" y="457.1" width="2.1" height="2.1"/><rect x="415.5" y="450.4" width="2.1" height="2.1"/><rect x="393.8" y="443.2" width="2.1" height="2.1"/><rect x="371.2" y="438.3" width="2.1" height="2.1"/><rect x="347.8" y="429.9" width="2.1" height="2.1"/><rect x="332.3" y="423.0" width="2.1" height="2.1"/><rect x="320.3" y="416.5" width="2.1" height="2.1"/><rect x="314.3" y="407.9" width="2.1" height="2.1"/><rect x="315.2" y="410.5" width="2.1" height="2.1"/><rect x="312.3" y="412.2" width="2.1" height="2.1"/><rect x="316.8" y="417.7" width="2.1" height="2.1"/><rect x="327.6" y="422.5" width="2.1" height="2.1"/><rect x="333.2" y="426.2" width="2.1" height="2.1"/><rect x="345.5" y="427.7" width="2.1" height="2.1"/><rect x="370.4" y="430.0" width="2.1" height="2.1"/><rect x="384.5" y="430.7" width="2.1" height="2.1"/><rect x="387.4" y="429.0" width="2.1" height="2.1"/><rect x="384.5" y="423.0" width="2.1" height="2.1"/><rect x="373.1" y="418.8" width="2.1" height="2.1"/><rect x="364.5" y="414.2" width="2.1" height="2.1"/><rect x="340.0" y="408.7" width="2.1" height="2.1"/><rect x="281.6" y="398.3" width="2.1" height="2.1"/><rect x="260.7" y="386.7" width="2.1" height="2.1"/><rect x="257.9" y="375.6" width="2.1" height="2.1"/><rect x="259.6" y="360.5" width="2.1" height="2.1"/><rect x="256.7" y="348.6" width="2.1" height="2.1"/><rect x="251.3" y="354.9" width="2.1" height="2.1"/><rect x="251.8" y="364.1" width="2.1" height="2.1"/><rect x="247.6" y="376.0" width="2.1" height="2.1"/><rect x="251.4" y="384.3" width="2.1" height="2.1"/><rect x="248.0" y="390.2" width="2.1" height="2.1"/><rect x="250.0" y="396.2" width="2.1" height="2.1"/><rect x="253.1" y="397.9" width="2.1" height="2.1"/><rect x="256.4" y="400.8" width="2.1" height="2.1"/><rect x="265.4" y="404.7" width="2.1" height="2.1"/><rect x="270.4" y="410.9" width="2.1" height="2.1"/><rect x="273.6" y="418.1" width="2.1" height="2.1"/><rect x="275.7" y="426.4" width="2.1" height="2.1"/><rect x="275.2" y="430.1" width="2.1" height="2.1"/><rect x="270.3" y="423.0" width="2.1" height="2.1"/><rect x="269.4" y="417.8" width="2.1" height="2.1"/><rect x="264.3" y="412.7" width="2.1" height="2.1"/><rect x="259.2" y="409.0" width="2.1" height="2.1"/><rect x="251.8" y="409.5" width="2.1" height="2.1"/><rect x="249.8" y="410.9" width="2.1" height="2.1"/><rect x="252.2" y="407.7" width="2.1" height="2.1"/><rect x="255.0" y="407.0" width="2.1" height="2.1"/><rect x="261.0" y="408.0" width="2.1" height="2.1"/><rect x="264.0" y="406.4" width="2.1" height="2.1"/><rect x="268.6" y="404.9" width="2.1" height="2.1"/><rect x="270.1" y="406.1" width="2.1" height="2.1"/><rect x="271.4" y="405.4" width="2.1" height="2.1"/><rect x="274.2" y="405.0" width="2.1" height="2.1"/><rect x="274.1" y="407.6" width="2.1" height="2.1"/><rect x="276.8" y="413.2" width="2.1" height="2.1"/><rect x="277.9" y="418.3" width="2.1" height="2.1"/><rect x="280.9" y="418.7" width="2.1" height="2.1"/><rect x="284.6" y="419.6" width="2.1" height="2.1"/><rect x="289.4" y="419.9" width="2.1" height="2.1"/><rect x="289.8" y="419.8" width="2.1" height="2.1"/><rect x="292.0" y="422.6" width="2.1" height="2.1"/><rect x="290.7" y="420.4" width="2.1" height="2.1"/><rect x="294.2" y="418.7" width="2.1" height="2.1"/><rect x="295.2" y="420.1" width="2.1" height="2.1"/><rect x="297.4" y="420.7" width="2.1" height="2.1"/><rect x="298.5" y="422.2" width="2.1" height="2.1"/><rect x="299.5" y="423.4" width="2.1" height="2.1"/><rect x="301.1" y="423.7" width="2.1" height="2.1"/><rect x="300.3" y="421.0" width="2.1" height="2.1"/><rect x="300.2" y="423.4" width="2.1" height="2.1"/><rect x="302.8" y="423.7" width="2.1" height="2.1"/><rect x="300.5" y="423.8" width="2.1" height="2.1"/><rect x="303.1" y="423.7" width="2.1" height="2.1"/><rect x="301.7" y="423.0" width="2.1" height="2.1"/><rect x="316.4" y="425.0" width="2.1" height="2.1"/><rect x="329.5" y="425.8" width="2.1" height="2.1"/><rect x="346.3" y="426.4" width="2.1" height="2.1"/><rect x="351.7" y="426.5" width="2.1" height="2.1"/><rect x="344.3" y="425.7" width="2.1" height="2.1"/><rect x="341.8" y="426.7" width="2.1" height="2.1"/><rect x="333.3" y="426.3" width="2.1" height="2.1"/><rect x="328.9" y="427.1" width="2.1" height="2.1"/><rect x="325.9" y="429.3" width="2.1" height="2.1"/><rect x="317.6" y="431.4" width="2.1" height="2.1"/><rect x="313.0" y="436.0" width="2.1" height="2.1"/><rect x="314.9" y="440.0" width="2.1" height="2.1"/><rect x="320.9" y="441.3" width="2.1" height="2.1"/><rect x="333.0" y="447.4" width="2.1" height="2.1"/><rect x="336.4" y="451.0" width="2.1" height="2.1"/><rect x="344.3" y="453.1" width="2.1" height="2.1"/><rect x="345.3" y="456.3" width="2.1" height="2.1"/><rect x="348.0" y="460.3" width="2.1" height="2.1"/><rect x="351.0" y="463.9" width="2.1" height="2.1"/><rect x="353.7" y="465.4" width="2.1" height="2.1"/><rect x="357.3" y="469.2" width="2.1" height="2.1"/><rect x="360.8" y="469.8" width="2.1" height="2.1"/><rect x="368.2" y="468.5" width="2.1" height="2.1"/><rect x="376.7" y="470.1" width="2.1" height="2.1"/><rect x="381.6" y="470.7" width="2.1" height="2.1"/><rect x="389.1" y="470.3" width="2.1" height="2.1"/><rect x="400.2" y="470.4" width="2.1" height="2.1"/><rect x="408.6" y="469.8" width="2.1" height="2.1"/><rect x="408.4" y="472.8" width="2.1" height="2.1"/><rect x="415.1" y="475.5" width="2.1" height="2.1"/><rect x="412.0" y="475.4" width="2.1" height="2.1"/><rect x="414.6" y="477.1" width="2.1" height="2.1"/><rect x="416.6" y="479.1" width="2.1" height="2.1"/><rect x="423.4" y="480.6" width="2.1" height="2.1"/><rect x="427.0" y="484.1" width="2.1" height="2.1"/><rect x="436.2" y="486.2" width="2.1" height="2.1"/><rect x="439.6" y="486.4" width="2.1" height="2.1"/><rect x="441.5" y="488.0" width="2.1" height="2.1"/><rect x="444.9" y="489.9" width="2.1" height="2.1"/><rect x="445.8" y="491.9" width="2.1" height="2.1"/><rect x="453.2" y="493.4" width="2.1" height="2.1"/><rect x="462.7" y="495.5" width="2.1" height="2.1"/><rect x="461.9" y="496.6" width="2.1" height="2.1"/><rect x="460.7" y="499.2" width="2.1" height="2.1"/><rect x="462.5" y="502.8" width="2.1" height="2.1"/><rect x="456.3" y="503.8" width="2.1" height="2.1"/><rect x="454.6" y="503.3" width="2.1" height="2.1"/><rect x="452.4" y="504.3" width="2.1" height="2.1"/><rect x="458.6" y="503.7" width="2.1" height="2.1"/><rect x="462.9" y="502.2" width="2.1" height="2.1"/><rect x="461.5" y="505.4" width="2.1" height="2.1"/><rect x="455.9" y="503.8" width="2.1" height="2.1"/><rect x="450.2" y="503.3" width="2.1" height="2.1"/><rect x="443.5" y="503.9" width="2.1" height="2.1"/><rect x="451.6" y="504.2" width="2.1" height="2.1"/><rect x="451.7" y="505.0" width="2.1" height="2.1"/><rect x="455.1" y="503.3" width="2.1" height="2.1"/><rect x="463.1" y="503.6" width="2.1" height="2.1"/><rect x="464.7" y="503.2" width="2.1" height="2.1"/><rect x="460.3" y="507.4" width="2.1" height="2.1"/><rect x="454.3" y="507.5" width="2.1" height="2.1"/><rect x="444.5" y="508.3" width="2.1" height="2.1"/><rect x="438.8" y="505.9" width="2.1" height="2.1"/><rect x="428.9" y="505.3" width="2.1" height="2.1"/><rect x="430.9" y="503.7" width="2.1" height="2.1"/><rect x="436.8" y="503.2" width="2.1" height="2.1"/><rect x="436.4" y="501.1" width="2.1" height="2.1"/><rect x="439.0" y="501.5" width="2.1" height="2.1"/><rect x="439.6" y="500.8" width="2.1" height="2.1"/><rect x="446.0" y="498.6" width="2.1" height="2.1"/><rect x="446.0" y="500.4" width="2.1" height="2.1"/><rect x="432.9" y="500.6" width="2.1" height="2.1"/><rect x="420.1" y="501.6" width="2.1" height="2.1"/><rect x="422.7" y="502.0" width="2.1" height="2.1"/><rect x="426.6" y="505.0" width="2.1" height="2.1"/><rect x="432.8" y="503.4" width="2.1" height="2.1"/><rect x="435.8" y="502.8" width="2.1" height="2.1"/><rect x="430.9" y="504.8" width="2.1" height="2.1"/><rect x="432.0" y="506.9" width="2.1" height="2.1"/><rect x="437.9" y="506.5" width="2.1" height="2.1"/><rect x="445.4" y="507.8" width="2.1" height="2.1"/><rect x="439.3" y="507.0" width="2.1" height="2.1"/><rect x="434.0" y="501.9" width="2.1" height="2.1"/><rect x="427.2" y="498.4" width="2.1" height="2.1"/><rect x="422.0" y="497.9" width="2.1" height="2.1"/><rect x="417.9" y="494.0" width="2.1" height="2.1"/><rect x="413.1" y="494.2" width="2.1" height="2.1"/><rect x="414.7" y="488.9" width="2.1" height="2.1"/><rect x="413.6" y="484.8" width="2.1" height="2.1"/><rect x="412.6" y="484.8" width="2.1" height="2.1"/><rect x="414.8" y="482.4" width="2.1" height="2.1"/><rect x="417.0" y="481.7" width="2.1" height="2.1"/><rect x="415.1" y="481.6" width="2.1" height="2.1"/><rect x="411.2" y="481.8" width="2.1" height="2.1"/><rect x="405.7" y="482.4" width="2.1" height="2.1"/><rect x="409.9" y="487.9" width="2.1" height="2.1"/><rect x="417.9" y="491.6" width="2.1" height="2.1"/><rect x="426.4" y="493.3" width="2.1" height="2.1"/><rect x="436.0" y="497.0" width="2.1" height="2.1"/><rect x="433.7" y="498.3" width="2.1" height="2.1"/><rect x="431.3" y="499.3" width="2.1" height="2.1"/><rect x="428.1" y="499.4" width="2.1" height="2.1"/><rect x="422.1" y="497.8" width="2.1" height="2.1"/><rect x="421.0" y="500.1" width="2.1" height="2.1"/><rect x="421.0" y="498.9" width="2.1" height="2.1"/><rect x="416.5" y="497.6" width="2.1" height="2.1"/><rect x="418.6" y="498.3" width="2.1" height="2.1"/><rect x="417.7" y="499.3" width="2.1" height="2.1"/><rect x="414.5" y="498.3" width="2.1" height="2.1"/><rect x="416.2" y="499.5" width="2.1" height="2.1"/><rect x="415.2" y="499.4" width="2.1" height="2.1"/><rect x="412.5" y="500.9" width="2.1" height="2.1"/><rect x="408.2" y="503.6" width="2.1" height="2.1"/><rect x="404.4" y="501.9" width="2.1" height="2.1"/><rect x="406.9" y="503.9" width="2.1" height="2.1"/><rect x="409.2" y="503.0" width="2.1" height="2.1"/><rect x="413.4" y="504.8" width="2.1" height="2.1"/><rect x="416.4" y="506.5" width="2.1" height="2.1"/><rect x="412.9" y="508.2" width="2.1" height="2.1"/><rect x="408.6" y="508.5" width="2.1" height="2.1"/><rect x="405.6" y="508.0" width="2.1" height="2.1"/><rect x="406.9" y="510.4" width="2.1" height="2.1"/><rect x="403.9" y="510.0" width="2.1" height="2.1"/><rect x="404.5" y="510.7" width="2.1" height="2.1"/><rect x="408.2" y="512.1" width="2.1" height="2.1"/><rect x="404.4" y="514.4" width="2.1" height="2.1"/><rect x="400.4" y="515.6" width="2.1" height="2.1"/><rect x="393.9" y="515.8" width="2.1" height="2.1"/><rect x="390.0" y="515.5" width="2.1" height="2.1"/></g>
<text x="342.0" y="87.8" font-size="10.4" fill="#fff" stroke="#fff" stroke-width="0.35" textLength="57" lengthAdjust="spacingAndGlyphs">Teapot Dome</text>
<text x="370.5" y="136.8" font-size="13" fill="#fff" text-anchor="middle" >Log Cross Plot</text>
<text x="268.0" y="149.8" font-size="9.6" fill="#fff" textLength="206.8" lengthAdjust="spacingAndGlyphs">WELL: FENIX &amp; SCIS/NPR #3/74-A-28&#160; (403 samples)</text>
<text x="127.6" y="670.6" font-size="8.5" fill="#fff" text-anchor="middle" >0</text>
<text x="176.2" y="670.6" font-size="8.5" fill="#fff" text-anchor="middle" >20</text>
<text x="224.8" y="670.6" font-size="8.5" fill="#fff" text-anchor="middle" >40</text>
<text x="273.4" y="670.6" font-size="8.5" fill="#fff" text-anchor="middle" >60</text>
<text x="322.0" y="670.6" font-size="8.5" fill="#fff" text-anchor="middle" >80</text>
<text x="370.6" y="670.6" font-size="8.5" fill="#fff" text-anchor="middle" >100</text>
<text x="419.2" y="670.6" font-size="8.5" fill="#fff" text-anchor="middle" >120</text>
<text x="467.8" y="670.6" font-size="8.5" fill="#fff" text-anchor="middle" >140</text>
<text x="516.4" y="670.6" font-size="8.5" fill="#fff" text-anchor="middle" >160</text>
<text x="565.0" y="670.6" font-size="8.5" fill="#fff" text-anchor="middle" >180</text>
<text x="613.6" y="670.6" font-size="8.5" fill="#fff" text-anchor="middle" >200</text>
<text x="329.0" y="680.9" font-size="10.2" fill="#fff" textLength="82.8" lengthAdjust="spacingAndGlyphs">GR - GAMMA RAY</text>
<text x="121.0" y="658.1" font-size="8.5" fill="#fff" text-anchor="end" >1</text>
<text x="121.0" y="415.1" font-size="8.5" fill="#fff" text-anchor="end" >10</text>
<text x="121.0" y="172.1" font-size="8.5" fill="#fff" text-anchor="end" >100</text>
<text x="90.8" y="413" font-size="10" fill="#fff" text-anchor="middle" transform="rotate(-90 90.8 413)">ILD - INDUCTION LOG DEEP</text>
<text x="885.0" y="190.0" font-size="9.5" fill="#fff" textLength="19" lengthAdjust="spacingAndGlyphs">2820</text>
<text x="885.0" y="236.3" font-size="9.5" fill="#fff" textLength="19" lengthAdjust="spacingAndGlyphs">2840</text>
<text x="885.0" y="282.7" font-size="9.5" fill="#fff" textLength="19" lengthAdjust="spacingAndGlyphs">2860</text>
<text x="885.0" y="329.0" font-size="9.5" fill="#fff" textLength="19" lengthAdjust="spacingAndGlyphs">2880</text>
<text x="885.0" y="375.3" font-size="9.5" fill="#fff" textLength="19" lengthAdjust="spacingAndGlyphs">2900</text>
<text x="885.0" y="421.7" font-size="9.5" fill="#fff" textLength="19" lengthAdjust="spacingAndGlyphs">2920</text>
<text x="885.0" y="468.0" font-size="9.5" fill="#fff" textLength="19" lengthAdjust="spacingAndGlyphs">2940</text>
<text x="885.0" y="514.3" font-size="9.5" fill="#fff" textLength="19" lengthAdjust="spacingAndGlyphs">2960</text>
<text x="885.0" y="560.6" font-size="9.5" fill="#fff" textLength="19" lengthAdjust="spacingAndGlyphs">2980</text>
<text x="885.0" y="607.0" font-size="9.5" fill="#fff" textLength="19" lengthAdjust="spacingAndGlyphs">3000</text>
<text x="885.0" y="653.3" font-size="9.5" fill="#fff" textLength="19" lengthAdjust="spacingAndGlyphs">3020</text>
<text x="767.0" y="163.2" font-size="8.5" fill="#e00000" text-anchor="middle" >GR</text>
<text x="843.0" y="163.0" font-size="8.5" fill="#00dd00" text-anchor="middle" >ILD</text>
<text x="766.5" y="668.0" font-size="8.5" fill="#e00000" text-anchor="middle" letter-spacing="-0.2">(0-200)</text>
<text x="842.5" y="668.0" font-size="8.5" fill="#00dd00" text-anchor="middle" letter-spacing="-0.2">(1-100)</text>
</svg>
</body></html>
